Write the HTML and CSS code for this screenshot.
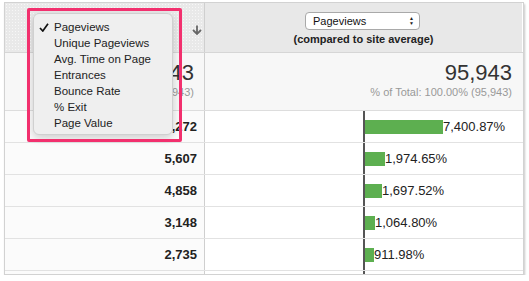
FILE: index.html
```html
<!DOCTYPE html>
<html lang="en">
<head>
    <meta charset="UTF-8">
    <title>Pageviews comparison</title>
    <link rel="stylesheet" href="styles.css">
</head>
<body>
<div id="Report">
    <div class="row head">
        <div class="cell left dots">
            <svg class="sort" width="10" height="10" viewBox="0 0 10 10"><path d="M5 0.5 V9 M1 5 L5 9 L9 5" fill="none" stroke="#666" stroke-width="1.8"/></svg>
        </div>
        <div class="cell right">
            <div class="select"><span>Pageviews</span><span class="arrows">&#9650;<br/>&#9660;</span></div>
            <div class="note">(compared to site average)</div>
        </div>
    </div>
    <div class="row total">
        <div class="cell left"><div class="big">95,943</div><div class="small">% of Total: 100.00% (95,943)</div></div>
        <div class="cell right"><div class="big">95,943</div><div class="small">% of Total: 100.00% (95,943)</div></div>
    </div>
    <div class="row data">
        <div class="cell left num">20,272</div>
        <div class="cell right bar"><div class="axis"><span class="b" style="width: 78px"></span>7,400.87%</div></div>
    </div>
    <div class="row data">
        <div class="cell left num">5,607</div>
        <div class="cell right bar"><div class="axis"><span class="b" style="width: 20px"></span>1,974.65%</div></div>
    </div>
    <div class="row data">
        <div class="cell left num">4,858</div>
        <div class="cell right bar"><div class="axis"><span class="b" style="width: 17px"></span>1,697.52%</div></div>
    </div>
    <div class="row data">
        <div class="cell left num">3,148</div>
        <div class="cell right bar"><div class="axis"><span class="b" style="width: 10px"></span>1,064.80%</div></div>
    </div>
    <div class="row data">
        <div class="cell left num">2,735</div>
        <div class="cell right bar"><div class="axis"><span class="b" style="width: 9px"></span>911.98%</div></div>
    </div>
    <div class="row foot">
        <div class="cell left"></div>
        <div class="cell right bar"><div class="axis"></div></div>
    </div>
</div>

<div id="Menu">
    <div class="item"><svg class="check" width="10" height="9" viewBox="0 0 10 9"><path d="M1 5 L3.8 8 L9 0.8" fill="none" stroke="#111" stroke-width="1.7"/></svg>Pageviews</div>
    <div class="item">Unique Pageviews</div>
    <div class="item">Avg. Time on Page</div>
    <div class="item">Entrances</div>
    <div class="item">Bounce Rate</div>
    <div class="item">% Exit</div>
    <div class="item">Page Value</div>
</div>
<div id="Highlight"></div>
</body>
</html>
```

FILE: styles.css
```css
body { margin: 0; background-color: #ffffff; font-family: "Liberation Sans", Arial, sans-serif; color: #222222; }

#Report { margin: 2px 0 0 4px; width: 518px; border: 1px solid #d2d2d2; box-shadow: 1px 2px 2px rgba(0, 0, 0, 0.22); }
.row { display: grid; grid-template-columns: 200px 317px; }
.cell.left { border-right: 1px solid #cfcfcf; }

.head { height: 49px; border-bottom: 1px solid #d6d6d6; }
.head .right { background-color: #e8e8e8; display: flex; flex-direction: column; align-items: center; padding-top: 9px; }
.dots { background-color: #e9e9e9; background-image: radial-gradient(#f7f7f7 0.7px, transparent 0.9px); background-size: 3px 3px; display: flex; justify-content: flex-end; align-items: center; padding-right: 2px; }
.sort { margin-top: 4px; }
.select { width: 101px; height: 16px; border: 1px solid #a9a9a9; border-radius: 4px; background-color: #ffffff; display: flex; align-items: center; justify-content: space-between; padding: 0 5px 0 7px; box-sizing: content-box; font-size: 11px; color: #111111; margin-left: -2px; }
.select .arrows { font-size: 5px; line-height: 5px; color: #222222; }
.note { font-size: 11px; font-weight: bold; color: #222222; margin-top: 3px; }

.total { height: 57px; background-color: #f7f7f7; border-bottom: 1px solid #dddddd; }
.total .cell { text-align: right; padding-top: 7px; }
.total .left { padding-right: 10px; }
.total .right { padding-right: 10px; }
.big { font-size: 22px; color: #333333; line-height: 26px; }
.small { font-size: 11px; color: #999999; margin-top: 0; }

.data { height: 31px; border-bottom: 1px solid #e2e2e2; }
.num { background-color: #fbfbfb; text-align: right; padding-right: 7px; font-size: 13px; font-weight: bold; line-height: 31px; }
.bar { padding-left: 158px; }
.axis { height: 100%; border-left: 2px solid #555555; display: flex; align-items: center; font-size: 13px; color: #222222; }
.b { display: inline-block; height: 14px; background-color: #5daf50; }
.foot { height: 3px; }
.foot .left { background-color: #fbfbfb; }

#Menu { position: absolute; left: 33px; top: 13px; width: 140px; padding: 5px 0 3px 0; background-color: #efefef; border: 1px solid #d0d0d0; border-radius: 6px; box-sizing: border-box; box-shadow: 0 3px 8px rgba(0, 0, 0, 0.18); }
.item { position: relative; height: 16px; line-height: 16px; padding-left: 20px; font-size: 11.5px; color: #222222; }
.check { position: absolute; left: 5px; top: 4px; }

#Highlight { position: absolute; left: 27px; top: 8px; width: 155px; height: 134px; border: 3px solid #f2306e; border-radius: 2px; box-sizing: border-box; }
```
